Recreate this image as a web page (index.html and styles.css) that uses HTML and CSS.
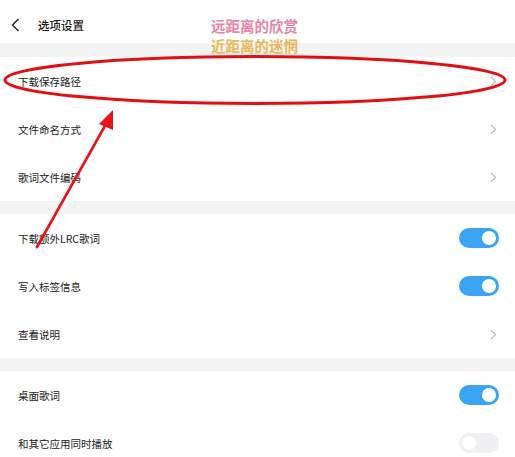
FILE: index.html
```html
<!DOCTYPE html>
<html lang="zh">
<head>
<meta charset="utf-8">
<link rel="stylesheet" href="styles.css">
</head>
<body>
<div class="page">
  <header class="topbar">
    <svg class="back" width="9" height="14" viewBox="0 0 9 14"><path d="M7.5 1 L1.5 7 L7.5 13" fill="none" stroke="#222" stroke-width="1.4"/></svg>
    <span class="title">选项设置</span>
  </header>
  <div class="gap g1"></div>
  <section class="group">
    <div class="row"><span>下载保存路径</span><svg class="chev" width="7" height="11" viewBox="0 0 7 11"><path d="M1 1 L5.5 5.5 L1 10" fill="none" stroke="#bcbcbc" stroke-width="1.2"/></svg></div>
    <div class="row"><span>文件命名方式</span><svg class="chev" width="7" height="11" viewBox="0 0 7 11"><path d="M1 1 L5.5 5.5 L1 10" fill="none" stroke="#bcbcbc" stroke-width="1.2"/></svg></div>
    <div class="row"><span>歌词文件编码</span><svg class="chev" width="7" height="11" viewBox="0 0 7 11"><path d="M1 1 L5.5 5.5 L1 10" fill="none" stroke="#bcbcbc" stroke-width="1.2"/></svg></div>
  </section>
  <div class="gap g2"></div>
  <section class="group">
    <div class="row"><span>下载额外LRC歌词</span><span class="toggle on"></span></div>
    <div class="row"><span>写入标签信息</span><span class="toggle on"></span></div>
    <div class="row"><span>查看说明</span><svg class="chev" width="7" height="11" viewBox="0 0 7 11"><path d="M1 1 L5.5 5.5 L1 10" fill="none" stroke="#bcbcbc" stroke-width="1.2"/></svg></div>
  </section>
  <div class="gap g2"></div>
  <section class="group">
    <div class="row"><span>桌面歌词</span><span class="toggle on"></span></div>
    <div class="row"><span>和其它应用同时播放</span><span class="toggle"></span></div>
  </section>

  <div class="caption">
    <div class="c1">远距离的欣赏</div>
    <div class="c2">近距离的迷惘</div>
  </div>
  <svg class="marks" width="515" height="457" viewBox="0 0 515 457">
    <ellipse cx="255" cy="80" rx="250" ry="23.5" fill="none" stroke="#e30d12" stroke-width="3"/>
    <line x1="37" y1="247" x2="106" y2="124" stroke="#e8141a" stroke-width="2.6" stroke-linecap="round"/>
    <path d="M113 110 L99 124 L113 130 Z" fill="#e8141a"/>
  </svg>
</div>
</body>
</html>
```
FILE: styles.css
```css
* { box-sizing: border-box; }
html, body { margin: 0; padding: 0; background: #fff; }
body {
  font-family: "Noto Sans CJK SC", "Noto Sans", sans-serif;
  color: #222;
}
.page {
  position: relative;
  width: 515px;
  height: 457px;
  overflow: hidden;
}
.topbar {
  height: 43px;
  display: flex;
  align-items: center;
  padding: 6px 0 0 11px;
}
.back { margin-right: 18px; }
.title {
  font-size: 11.5px;
  font-weight: 500;
  color: #1a1a1a;
}
.gap { background: #f4f4f4; }
.g1 { height: 14px; }
.g2 { height: 13px; }
.group { display: flex; flex-direction: column; }
.row {
  height: 48px;
  display: flex;
  align-items: center;
  justify-content: space-between;
  padding: 0 16px 0 18px;
  font-size: 10.5px;
  color: #222;
}
.chev { margin-right: 2px; }
.toggle {
  position: relative;
  width: 40px;
  height: 20px;
  border-radius: 10px;
  background: #f0f0f3;
}
.toggle::after {
  content: "";
  position: absolute;
  top: 3px;
  left: 3px;
  width: 14px;
  height: 14px;
  border-radius: 50%;
  background: #fff;
}
.toggle.on { background: #3ba5f4; }
.toggle.on::after { left: 23px; }
.caption {
  position: absolute;
  left: 211px;
  top: 16px;
  font-size: 14.5px;
  font-weight: 700;
  line-height: 20px;
}
.c1 { color: #e983a6; }
.c2 { color: #e8b85c; }
.marks { position: absolute; left: 0; top: 0; pointer-events: none; }
```
